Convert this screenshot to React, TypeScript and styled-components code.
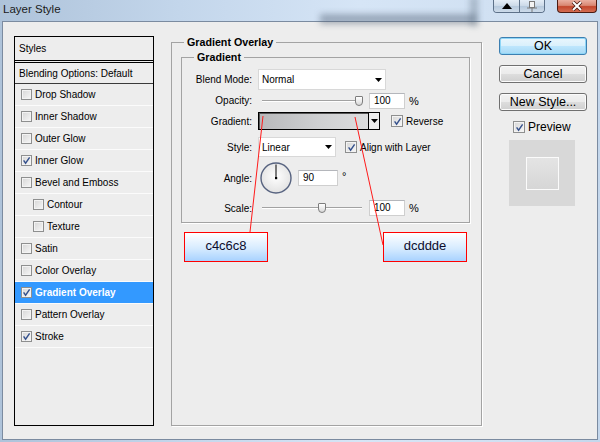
import React from 'react';
import styled, { createGlobalStyle } from 'styled-components';

const GlobalStyle = createGlobalStyle`
  * { box-sizing: border-box; }
  html, body { margin: 0; padding: 0; background: #c9dbee; }
  body { font-family: 'Liberation Sans', Arial, sans-serif; color: #000; }
`;

type StyleItem = { name: string; checked?: boolean; sub?: boolean; selected?: boolean };

const styleItems: StyleItem[] = [
	{ name: 'Drop Shadow' },
	{ name: 'Inner Shadow' },
	{ name: 'Outer Glow' },
	{ name: 'Inner Glow', checked: true },
	{ name: 'Bevel and Emboss' },
	{ name: 'Contour', sub: true },
	{ name: 'Texture', sub: true },
	{ name: 'Satin' },
	{ name: 'Color Overlay' },
	{ name: 'Gradient Overlay', checked: true, selected: true },
	{ name: 'Pattern Overlay' },
	{ name: 'Stroke', checked: true },
];

const Arrow = () => (
	<svg width='7' height='4' viewBox='0 0 7 4'>
		<polygon points='0,0 7,0 3.5,4' fill='#000' />
	</svg>
);

const CheckMark = () => (
	<svg width='9' height='9' viewBox='0 0 9 9'>
		<path d='M1.6 4.4 L3.6 7.2 L7.6 1.4' stroke='#34508c' strokeWidth='1.4' fill='none' />
	</svg>
);

const Check = ({ on, size = 11 }: { on?: boolean; size?: number }) => (
	<CheckBox $size={size}>{on && <CheckMark />}</CheckBox>
);

const Dial = () => (
	<svg width='32' height='32' viewBox='0 0 32 32'>
		<defs>
			<radialGradient id='dialFill' cx='50%' cy='45%' r='55%'>
				<stop offset='0%' stopColor='#ffffff' />
				<stop offset='100%' stopColor='#e2e2e2' />
			</radialGradient>
		</defs>
		<circle cx='16' cy='16' r='15' fill='url(#dialFill)' stroke='#56627f' strokeWidth='1.4' />
		<line x1='16' y1='16' x2='16' y2='2.5' stroke='#000' strokeWidth='1' />
		<rect x='15' y='15' width='2.2' height='2.2' fill='#000' />
	</svg>
);

const Slider = ({ pos }: { pos: number }) => (
	<SliderBox>
		<Track />
		<Thumb style={{ left: pos - 4 }} />
	</SliderBox>
);

const App = () => {
	return (
		<>
			<GlobalStyle />
			<Frame>
				<TitleBar>
					<Title>Layer Style</Title>
					<CaptionGroup>
						<CaptionButton>
							<svg width='10' height='6' viewBox='0 0 10 6'>
								<polygon points='0,6 10,6 5,0' fill='#000' />
							</svg>
						</CaptionButton>
						<CaptionButton $divider>
							<svg width='12' height='11' viewBox='0 0 12 11'>
								<rect x='3.5' y='0.5' width='5' height='6' fill='#f4f4f4' stroke='#7a7a7a' />
								<line x1='1' y1='7' x2='11' y2='7' stroke='#7a7a7a' />
								<line x1='6' y1='7' x2='6' y2='11' stroke='#7a7a7a' />
							</svg>
						</CaptionButton>
					</CaptionGroup>
					<CloseButton>
						<svg width='12' height='10' viewBox='0 0 12 10'>
							<path d='M2 1 L10 9 M10 1 L2 9' stroke='#4a1a12' strokeWidth='3.6' />
							<path d='M2 1 L10 9 M10 1 L2 9' stroke='#fff' strokeWidth='2' />
						</svg>
					</CloseButton>
				</TitleBar>

				<Client>
					<StyleList>
						<ListHeader>Styles</ListHeader>
						<BlendRow>Blending Options: Default</BlendRow>
						{styleItems.map((item) => (
							<ListItem key={item.name} $sub={item.sub} $selected={item.selected}>
								<Check on={item.checked} />
								<span>{item.name}</span>
							</ListItem>
						))}
					</StyleList>

					<Group $pad='3px 11px 0 9px' $width='311px'>
						<Legend $offset={3}>Gradient Overlay</Legend>
						<Group $pad='5px 0 0 0'>
							<Legend $offset={12}>Gradient</Legend>
							<FormRow $h={23}>
								<Label>Blend Mode:</Label>
								<Controls>
									<Dropdown $w={128} $h={21}>
										<span>Normal</span>
										<Arrow />
									</Dropdown>
								</Controls>
							</FormRow>
							<FormRow $h={19}>
								<Label>Opacity:</Label>
								<Controls>
									<Slider pos={101} />
									<Field $w={36} $gap={7}>100</Field>
									<Unit>%</Unit>
								</Controls>
							</FormRow>
							<FormRow $h={22}>
								<Label>Gradient:</Label>
								<Controls>
									<Swatch>
										<SwatchFill />
										<SwatchArrow>
											<Arrow />
										</SwatchArrow>
									</Swatch>
									<CheckLabel $gap={11}>
										<Check on size={12} />
										Reverse
									</CheckLabel>
								</Controls>
							</FormRow>
							<FormRow $h={30}>
								<Label>Style:</Label>
								<Controls>
									<Dropdown $w={78} $h={20}>
										<span>Linear</span>
										<Arrow />
									</Dropdown>
									<CheckLabel $gap={9}>
										<Check on size={12} />
										Align with Layer
									</CheckLabel>
								</Controls>
							</FormRow>
							<FormRow $h={32}>
								<Label>Angle:</Label>
								<Controls>
									<DialWrap>
										<Dial />
									</DialWrap>
									<Field $w={40} $gap={6}>90</Field>
									<Degree>°</Degree>
								</Controls>
							</FormRow>
							<FormRow $h={28}>
								<Label>Scale:</Label>
								<Controls>
									<Slider pos={64} />
									<Field $w={36} $gap={7}>100</Field>
									<Unit>%</Unit>
								</Controls>
							</FormRow>
						</Group>
					</Group>

					<Side>
						<Button $primary>OK</Button>
						<Button>Cancel</Button>
						<Button>New Style...</Button>
						<PreviewRow>
							<Check on size={12} />
							Preview
						</PreviewRow>
						<PreviewBox>
							<PreviewSwatch />
						</PreviewBox>
					</Side>
				</Client>

				<Annotations>
					<svg width='600' height='442' viewBox='0 0 600 442'>
						<line x1='263' y1='116' x2='250' y2='232' stroke='#ff1a1a' strokeWidth='1' />
						<line x1='355' y1='117' x2='383' y2='245' stroke='#ff1a1a' strokeWidth='1' />
					</svg>
					<Callout $x={184} $y={232}>c4c6c8</Callout>
					<Callout $x={383} $y={232}>dcddde</Callout>
				</Annotations>
			</Frame>
		</>
	);
};

export default App;

const Frame = styled.div`
	position: relative;
	width: 600px;
	height: 442px;
	display: flex;
	flex-direction: column;
	padding: 0 2px 2px;
	overflow: hidden;
	background: linear-gradient(to right, #aec3da 0%, #c3d6eb 30%, #d6e5f6 60%, #d0e0f2 85%, #c4d7ec 100%);
`;

const TitleBar = styled.div`
	position: relative;
	height: 21px;
	flex-shrink: 0;
	display: flex;
	align-items: flex-start;
	&::before {
		content: '';
		position: absolute;
		left: 318px;
		top: 14px;
		width: 156px;
		height: 10px;
		background: rgba(80, 96, 116, 0.45);
		filter: blur(3px);
	}
	&::after {
		content: '';
		position: absolute;
		left: 468px;
		top: -4px;
		width: 8px;
		height: 30px;
		background: rgba(80, 96, 116, 0.35);
		filter: blur(3px);
	}
`;

const Title = styled.span`
	position: relative;
	z-index: 1;
	margin: 2px 0 0 1px;
	font-size: 11.5px;
	line-height: 14px;
	color: #1b1b1b;
`;

const CaptionGroup = styled.div`
	position: relative;
	z-index: 1;
	margin-left: auto;
	margin-right: 12px;
	display: flex;
	height: 13px;
	border: 1px solid #5d7189;
	border-top: 0;
	border-radius: 0 0 4px 4px;
	overflow: hidden;
`;

const CaptionButton = styled.div<{ $divider?: boolean }>`
	width: 25px;
	display: flex;
	align-items: center;
	justify-content: center;
	border-left: ${({ $divider }) => ($divider ? '1px solid #5d7189' : '0')};
	background: linear-gradient(#e4edf7 0%, #cbd9e8 50%, #b6c9dd 51%, #cddbea 100%);
`;

const CloseButton = styled.div`
	position: relative;
	z-index: 1;
	width: 40px;
	height: 13px;
	margin-right: 1px;
	display: flex;
	align-items: center;
	justify-content: center;
	border: 1px solid #4b1b12;
	border-top: 0;
	border-radius: 0 0 4px 4px;
	background: linear-gradient(#eab0a2 0%, #d98873 45%, #c3472d 55%, #d46d52 100%);
`;

const Client = styled.div`
	flex: 1;
	display: flex;
	align-items: stretch;
	gap: 17px;
	padding: 14px 10px 13px 11px;
	background: #ededed;
	border: 1px solid #7b8ba0;
	font-size: 10px;
`;

const StyleList = styled.div`
	width: 140px;
	flex-shrink: 0;
	display: flex;
	flex-direction: column;
	border: 1px solid #000;
`;

const ListHeader = styled.div`
	height: 26px;
	padding-left: 4px;
	display: flex;
	align-items: center;
	border-bottom: 3px double #000;
`;

const BlendRow = styled.div`
	height: 21px;
	padding-left: 4px;
	display: flex;
	align-items: center;
	border-bottom: 1px solid #3a3a3a;
`;

const ListItem = styled.div<{ $sub?: boolean; $selected?: boolean }>`
	height: 22px;
	display: flex;
	align-items: center;
	gap: 3px;
	padding-left: ${({ $sub }) => ($sub ? 18 : 6)}px;
	border-bottom: 1px solid #fbfbfb;
	background: ${({ $selected }) => ($selected ? '#3399ff' : 'transparent')};
	color: ${({ $selected }) => ($selected ? '#fff' : '#000')};
	font-weight: ${({ $selected }) => ($selected ? 'bold' : 'normal')};
`;

const CheckBox = styled.span<{ $size: number }>`
	width: ${({ $size }) => $size}px;
	height: ${({ $size }) => $size}px;
	flex-shrink: 0;
	display: flex;
	align-items: center;
	justify-content: center;
	border: 1px solid #8e8f8f;
	background: linear-gradient(135deg, #d6d6d6 0%, #f7f7f7 100%);
	box-shadow: inset 0 0 0 1px #f3f3f3;
`;

const Group = styled.fieldset<{ $pad: string; $width?: string }>`
	margin: 0;
	min-width: 0;
	width: ${({ $width }) => $width || 'auto'};
	flex-shrink: 0;
	padding: ${({ $pad }) => $pad};
	border: 1px solid #a3a3a3;
	box-shadow: 1px 1px 0 #fff;
`;

const Legend = styled.legend<{ $offset: number }>`
	margin-left: ${({ $offset }) => $offset}px;
	padding: 0 3px;
	font-size: 10.7px;
	line-height: 12px;
	font-weight: bold;
`;

const FormRow = styled.div<{ $h: number }>`
	height: ${({ $h }) => $h}px;
	display: grid;
	grid-template-columns: 70px auto;
	column-gap: 6px;
	align-items: center;
`;

const Label = styled.span`
	text-align: right;
`;

const Controls = styled.div`
	display: flex;
	align-items: center;
`;

const Dropdown = styled.div<{ $w: number; $h: number }>`
	width: ${({ $w }) => $w}px;
	height: ${({ $h }) => $h}px;
	display: flex;
	align-items: center;
	justify-content: space-between;
	padding: 0 3px 0 3px;
	background: #fff;
	border: 1px solid #d8d8d8;
`;

const SliderBox = styled.div`
	position: relative;
	width: 104px;
	height: 12px;
	display: flex;
	align-items: center;
`;

const Track = styled.div`
	margin-left: 4px;
	width: 100%;
	height: 2px;
	border-top: 1px solid #a2a2a2;
	background: #fff;
`;

const Thumb = styled.div`
	position: absolute;
	top: 1px;
	width: 8px;
	height: 10px;
	border: 1px solid #7d7d7d;
	border-radius: 1px 1px 4px 4px;
	background: linear-gradient(#ffffff, #d9d9d9);
`;

const Field = styled.div<{ $w: number; $gap: number }>`
	width: ${({ $w }) => $w}px;
	height: 16px;
	margin-left: ${({ $gap }) => $gap}px;
	padding-left: 4px;
	line-height: 14px;
	background: #fff;
	border: 1px solid #cfcfcf;
	border-top-color: #b4b6bb;
`;

const Unit = styled.span`
	margin-left: 4px;
	font-size: 11px;
`;

const Degree = styled.span`
	margin-left: 4px;
	align-self: flex-start;
	margin-top: 8px;
	font-size: 11px;
`;

const Swatch = styled.div`
	width: 122px;
	height: 18px;
	display: flex;
	border: 1px solid #000;
	box-shadow: inset 1px 1px 0 #555;
`;

const SwatchFill = styled.div`
	flex: 1;
	margin: 1px 0 0 1px;
	background: linear-gradient(to right, #b8b9bb 0%, #cfd0d2 55%, #dcddde 100%);
`;

const SwatchArrow = styled.div`
	width: 11px;
	display: flex;
	align-items: center;
	justify-content: center;
	border-left: 1px solid #000;
	background: #ececec;
`;

const CheckLabel = styled.div<{ $gap: number }>`
	margin-left: ${({ $gap }) => $gap}px;
	display: flex;
	align-items: center;
	gap: 3px;
`;

const DialWrap = styled.div`
	margin-left: 2px;
	width: 32px;
	height: 32px;
	display: flex;
`;

const Side = styled.div`
	width: 88px;
	flex-shrink: 0;
	display: flex;
	flex-direction: column;
	padding-top: 1px;
`;

const Button = styled.div<{ $primary?: boolean }>`
	height: 18px;
	margin-bottom: 10px;
	display: flex;
	align-items: center;
	justify-content: center;
	font-size: 12.5px;
	border-radius: 3px;
	border: 1px solid ${({ $primary }) => ($primary ? '#3c7fb1' : '#707070')};
	box-shadow: ${({ $primary }) => ($primary ? 'inset 0 0 0 1px #8fd6f7' : 'inset 0 0 0 1px #fbfbfb')};
	background: ${({ $primary }) =>
		$primary
			? 'linear-gradient(#eaf6fd 0%, #d9f0fc 50%, #bee6fd 51%, #a7d9f5 100%)'
			: 'linear-gradient(#f2f2f2 0%, #ebebeb 50%, #dddddd 51%, #cfcfcf 100%)'};
`;

const PreviewRow = styled.div`
	height: 12px;
	margin-left: 14px;
	display: flex;
	align-items: center;
	gap: 3px;
	font-size: 12px;
`;

const PreviewBox = styled.div`
	width: 66px;
	height: 66px;
	margin: 7px 0 0 10px;
	display: flex;
	align-items: center;
	justify-content: center;
	background: #d8d8d8;
`;

const PreviewSwatch = styled.div`
	width: 33px;
	height: 33px;
	border: 1px solid #fbfbfb;
	background: linear-gradient(#e4e4e4, #d6d6d6);
`;

const Annotations = styled.div`
	position: absolute;
	inset: 0;
	pointer-events: none;
	svg {
		position: absolute;
		left: 0;
		top: 0;
	}
`;

const Callout = styled.div<{ $x: number; $y: number }>`
	position: absolute;
	left: ${({ $x }) => $x}px;
	top: ${({ $y }) => $y}px;
	width: 84px;
	height: 30px;
	padding-bottom: 4px;
	display: flex;
	align-items: center;
	justify-content: center;
	border: 1px solid #ff0000;
	background: linear-gradient(#ffffff 0%, #d6ebff 55%, #a8d2ff 100%);
	font-size: 13px;
	color: #0c0c2c;
`;
